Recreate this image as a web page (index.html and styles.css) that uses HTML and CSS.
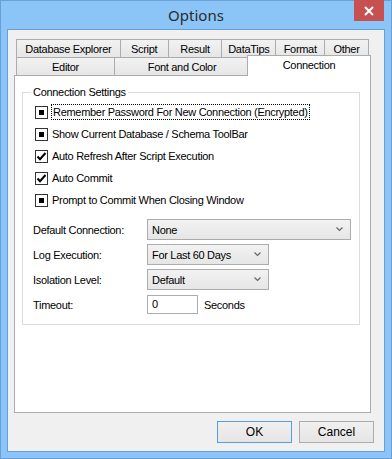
FILE: index.html
```html
<!DOCTYPE html>
<html>
<head>
<meta charset="utf-8">
<link rel="stylesheet" href="styles.css">
</head>
<body>
<div class="window">
  <div class="titlebar">
    <span class="title">Options</span>
    <div class="close">
      <svg width="10" height="10" viewBox="0 0 10 10"><path d="M1 1 L9 9 M9 1 L1 9" stroke="#fff" stroke-width="2"/></svg>
    </div>
  </div>
  <div class="client">
    <div class="tabs">
      <div class="tab-row">
        <div class="tab w-db">Database Explorer</div>
        <div class="tab w-script">Script</div>
        <div class="tab w-result">Result</div>
        <div class="tab w-tips">DataTips</div>
        <div class="tab w-format">Format</div>
        <div class="tab w-other last">Other</div>
      </div>
      <div class="tab-row">
        <div class="tab w-editor">Editor</div>
        <div class="tab w-font">Font and Color</div>
        <div class="tab w-conn last selected">Connection</div>
      </div>
    </div>
    <div class="panel">
      <fieldset class="group">
        <legend>Connection Settings</legend>
        <div class="check-row"><span class="box mixed"></span><span class="focus">Remember Password For New Connection (Encrypted)</span></div>
        <div class="check-row"><span class="box mixed"></span><span class="lbl">Show Current Database / Schema ToolBar</span></div>
        <div class="check-row"><span class="box"><svg width="11" height="11" viewBox="0 0 11 11"><path d="M1.5 5.5 L4 8.2 L9.5 2" fill="none" stroke="#000" stroke-width="2"/></svg></span><span class="lbl">Auto Refresh After Script Execution</span></div>
        <div class="check-row"><span class="box"><svg width="11" height="11" viewBox="0 0 11 11"><path d="M1.5 5.5 L4 8.2 L9.5 2" fill="none" stroke="#000" stroke-width="2"/></svg></span><span class="lbl">Auto Commit</span></div>
        <div class="check-row"><span class="box mixed"></span><span class="lbl">Prompt to Commit When Closing Window</span></div>
        <div class="fields">
          <span class="flabel">Default Connection:</span>
          <div class="select wide"><span>None</span><svg class="arrow" width="7" height="5" viewBox="0 0 7 5"><path d="M0.5 0.5 L3.5 3.5 L6.5 0.5" fill="none" stroke="#666" stroke-width="1.2"/></svg></div>
          <span class="flabel">Log Execution:</span>
          <div class="select narrow"><span>For Last 60 Days</span><svg class="arrow" width="7" height="5" viewBox="0 0 7 5"><path d="M0.5 0.5 L3.5 3.5 L6.5 0.5" fill="none" stroke="#666" stroke-width="1.2"/></svg></div>
          <span class="flabel">Isolation Level:</span>
          <div class="select narrow"><span>Default</span><svg class="arrow" width="7" height="5" viewBox="0 0 7 5"><path d="M0.5 0.5 L3.5 3.5 L6.5 0.5" fill="none" stroke="#666" stroke-width="1.2"/></svg></div>
          <span class="flabel">Timeout:</span>
          <div class="timeout"><span class="input">0</span><span class="unit">Seconds</span></div>
        </div>
      </fieldset>
    </div>
    <div class="buttons">
      <div class="btn default">OK</div>
      <div class="btn">Cancel</div>
    </div>
  </div>
</div>
</body>
</html>
```

FILE: styles.css
```css
* { box-sizing: border-box; }
html, body { margin: 0; padding: 0; }
body {
  width: 392px;
  height: 459px;
  font-family: "Liberation Sans", Arial, sans-serif;
  font-size: 11px;
  letter-spacing: -0.3px;
  color: #000;
}
.window {
  width: 392px;
  height: 459px;
  background: #8bc5f7;
  border: 1px solid #6a9ed4;
  padding: 0 6px 6px 6px;
  display: flex;
  flex-direction: column;
}
.titlebar {
  height: 28px;
  display: grid;
  grid-template-columns: 1fr auto 1fr;
  align-items: start;
}
.title {
  grid-column: 2;
  font-family: "Noto Sans", sans-serif;
  font-size: 15px;
  letter-spacing: 0;
  line-height: 20px;
  margin-top: 4px;
  color: #2b2b2b;
}
.close {
  grid-column: 3;
  justify-self: end;
  width: 30px;
  height: 21px;
  margin-top: -1px;
  margin-right: 1px;
  background: #c75050;
  display: flex;
  align-items: center;
  justify-content: center;
}
.client {
  flex: 1;
  background: #f0f0f0;
  border: 1px solid #6a9ed4;
  padding: 9px 10px 8px 6px;
  display: flex;
  flex-direction: column;
}
.tabs {
  margin-left: 2px;
  margin-right: 5px;
  display: flex;
  flex-direction: column;
}
.tab-row {
  display: flex;
  height: 18px;
}
.tab {
  height: 18px;
  border: 1px solid #acacac;
  border-right: none;
  border-bottom: none;
  background: linear-gradient(#f2f2f2, #e6e6e6);
  text-align: center;
  line-height: 18px;
  white-space: nowrap;
}
.tab.last { border-right: 1px solid #acacac; }
.w-db { width: 104px; }
.w-script { width: 48px; }
.w-result { width: 54px; }
.w-tips { width: 54px; }
.w-format { width: 49px; }
.w-other { width: 45px; }
.w-editor { width: 98px; }
.w-font { width: 135px; }
.w-conn { width: 120px; }
.tab.selected {
  position: relative;
  z-index: 1;
  background: #fff;
  height: 21px;
  margin: -2px -2px -1px -2px;
  width: 124px;
  line-height: 18px;
  border-left: 1px solid #acacac;
}
.panel {
  height: 338px;
  margin-right: 3px;
  background: #fff;
  border: 1px solid #acacac;
  padding: 10px 10px 0 7px;
}
.group {
  margin: 0;
  padding: 2px 0 0 0;
  border: 1px solid #dcdcdc;
  height: 239px;
}
.group legend {
  margin-left: 8px;
  padding: 0 2px;
  line-height: 13px;
}
.check-row {
  height: 22px;
  display: flex;
  align-items: center;
  padding-left: 12px;
}
.box {
  width: 13px;
  height: 13px;
  border: 1px solid #333;
  background: #fff;
  display: flex;
  align-items: center;
  justify-content: center;
  margin-right: 3px;
}
.box.mixed::after {
  content: "";
  width: 5px;
  height: 5px;
  background: #000;
}
.lbl { padding: 1px 1px; }
.focus {
  border: 1px dotted #000;
  padding: 0 1px;
  line-height: 14px;
}
.fields {
  margin-top: 8px;
  display: grid;
  grid-template-columns: 114px auto;
  grid-auto-rows: 21px;
  row-gap: 4px;
  padding-left: 10px;
  align-items: center;
}
.flabel { line-height: 14px; }
.select {
  height: 21px;
  border: 1px solid #acacac;
  background: linear-gradient(#f2f2f2, #e6e6e6);
  display: flex;
  align-items: center;
  justify-content: space-between;
  padding: 0 7px 0 4px;
}
.select.wide { width: 204px; }
.select.narrow { width: 122px; }
.timeout {
  display: flex;
  align-items: center;
  gap: 6px;
}
.input {
  width: 51px;
  height: 19px;
  border: 1px solid #abadb3;
  background: #fff;
  padding-left: 4px;
  line-height: 17px;
}
.buttons {
  margin-top: 8px;
  display: flex;
  justify-content: flex-end;
  gap: 7px;
}
.btn {
  width: 75px;
  height: 22px;
  border: 1px solid #acacac;
  background: linear-gradient(#f0f0f0, #e5e5e5);
  text-align: center;
  line-height: 20px;
  font-size: 12px;
  letter-spacing: 0;
}
.btn.default { border-color: #569de5; }
```
